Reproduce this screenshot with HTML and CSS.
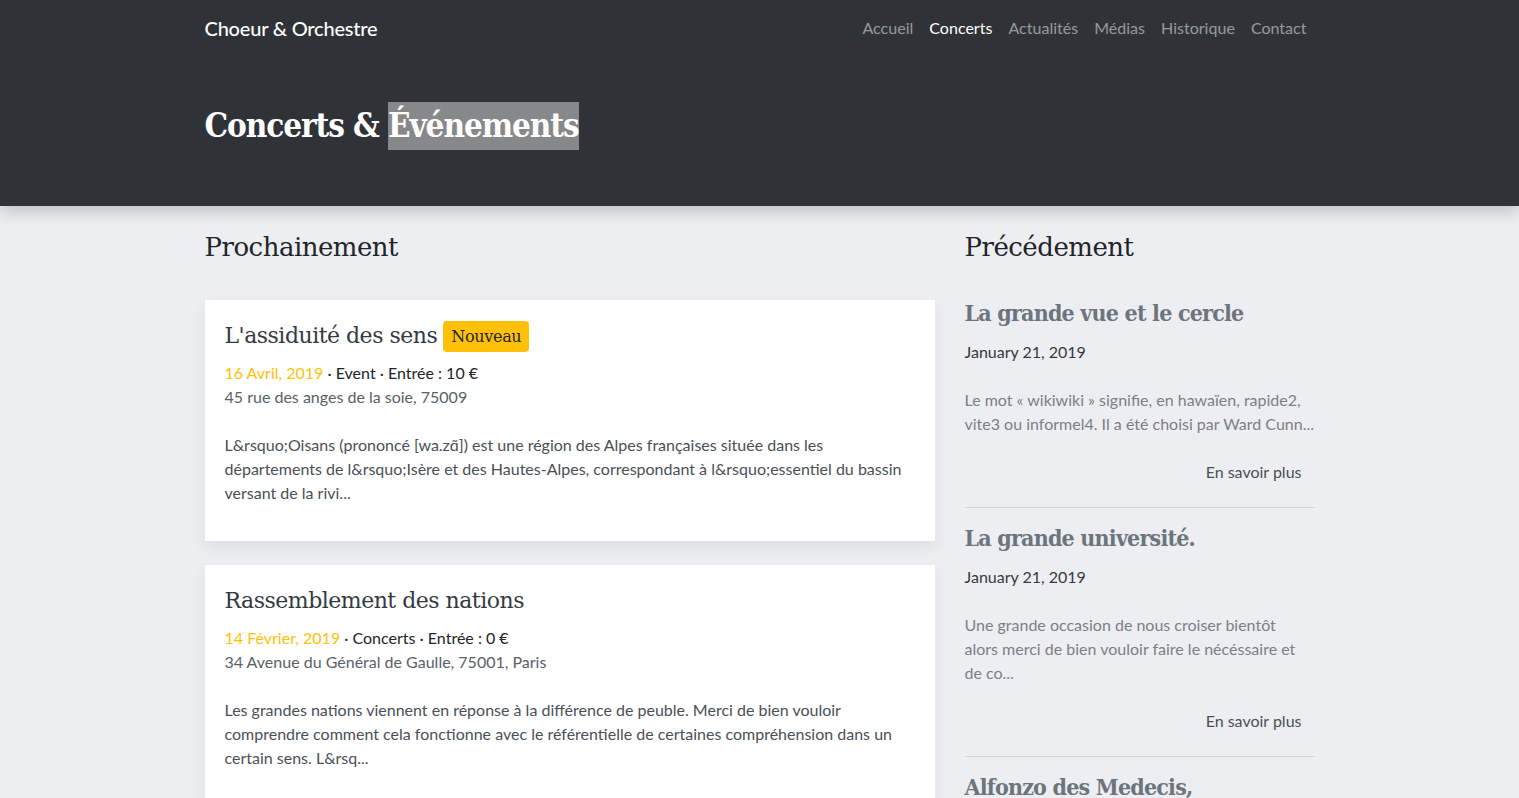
FILE: index.html
```html
<!DOCTYPE html>
<html lang="fr">
<head>
<meta charset="utf-8">
<title>Concerts & Événements</title>
<link rel="stylesheet" href="styles.css">
</head>
<body>
<header class="hero">
  <nav class="navbar container">
    <a class="brand" href="#">Choeur &amp; Orchestre</a>
    <ul class="nav">
      <li><a href="#">Accueil</a></li>
      <li><a class="active" href="#">Concerts</a></li>
      <li><a href="#">Actualités</a></li>
      <li><a href="#">Médias</a></li>
      <li><a href="#">Historique</a></li>
      <li><a href="#">Contact</a></li>
    </ul>
  </nav>
  <div class="container hero-title">
    <h1>Concerts &amp; <span class="sel">Événements</span></h1>
  </div>
</header>

<main class="container main">
  <section class="col-main">
    <h2 class="section-title">Prochainement</h2>

    <article class="card">
      <h3 class="card-title">L'assiduité des sens <span class="badge">Nouveau</span></h3>
      <p class="meta"><span class="date">16 Avril, 2019</span> · Event · Entrée : 10 €</p>
      <p class="address">45 rue des anges de la soie, 75009</p>
      <p class="excerpt">L&amp;rsquo;Oisans (prononcé [wa.zɑ̃]) est une région des Alpes françaises située dans les départements de l&amp;rsquo;Isère et des Hautes-Alpes, correspondant à l&amp;rsquo;essentiel du bassin versant de la rivi...</p>
    </article>

    <article class="card">
      <h3 class="card-title">Rassemblement des nations</h3>
      <p class="meta"><span class="date">14 Février, 2019</span> · Concerts · Entrée : 0 €</p>
      <p class="address">34 Avenue du Général de Gaulle, 75001, Paris</p>
      <p class="excerpt">Les grandes nations viennent en réponse à la différence de peuble. Merci de bien vouloir comprendre comment cela fonctionne avec le référentielle de certaines compréhension dans un certain sens. L&amp;rsq...</p>
    </article>
  </section>

  <aside class="col-side">
    <h2 class="section-title">Précédement</h2>

    <div class="post">
      <h3 class="post-title">La grande vue et le cercle</h3>
      <p class="post-date">January 21, 2019</p>
      <p class="post-excerpt">Le mot « wikiwiki » signifie, en hawaïen, rapide2, vite3 ou informel4. Il a été choisi par Ward Cunn...</p>
      <div class="more"><a href="#">En savoir plus</a></div>
    </div>

    <div class="post">
      <h3 class="post-title">La grande université.</h3>
      <p class="post-date">January 21, 2019</p>
      <p class="post-excerpt">Une grande occasion de nous croiser bientôt<br>alors merci de bien vouloir faire le nécéssaire et de co...</p>
      <div class="more"><a href="#">En savoir plus</a></div>
    </div>

    <div class="post">
      <h3 class="post-title">Alfonzo des Medecis,</h3>
      <p class="post-date">January 21, 2019</p>
      <p class="post-excerpt">Une rencontre inattendue.</p>
    </div>
  </aside>
</main>
</body>
</html>
```

FILE: styles.css
```css
* { box-sizing: border-box; }
html, body { margin: 0; padding: 0; }
body {
  background: #edeef2;
  font-family: Lato, "Open Sans", sans-serif;
  font-size: 16px;
  line-height: 24px;
  color: #212529;
}
a { text-decoration: none; }
p { margin: 0; }

.container {
  width: 1140px;
  margin: 0 auto;
  padding: 0 15px;
}

.hero {
  background: #2f3337;
  height: 206px;
  box-shadow: 0 6px 14px rgba(0, 0, 0, 0.18);
  position: relative;
  z-index: 1;
}

.navbar {
  height: 56px;
  display: flex;
  align-items: center;
  justify-content: space-between;
}
.brand {
  color: #fff;
  font-size: 20px;
  font-weight: 500;
  letter-spacing: -0.2px;
}
.nav {
  list-style: none;
  margin: 0;
  padding: 0;
  display: flex;
}
.nav a {
  display: block;
  padding: 8px;
  color: rgba(255, 255, 255, 0.5);
  font-size: 16px;
  letter-spacing: 0.02px;
}
.nav a.active { color: #fff; }

.hero-title h1 {
  margin: 0;
  padding-top: 46px;
  font-family: "DejaVu Serif", "Liberation Serif", serif;
  font-stretch: semi-condensed;
  font-size: 33px;
  line-height: 48px;
  font-weight: bold;
  color: #fff;
  letter-spacing: -1.1px;
}
.sel {
  display: inline-block;
  background: #87888a;
  line-height: 48px;
}

.main {
  display: flex;
  gap: 30px;
  padding-top: 22px;
}
.col-main { width: 730px; flex: none; }
.col-side { width: 350px; flex: none; }

.section-title {
  margin: 0 0 34px;
  font-family: "DejaVu Serif", "Liberation Serif", serif;
  font-weight: normal;
  font-size: 26px;
  line-height: 38px;
  color: #212529;
  letter-spacing: -0.5px;
}

.card {
  background: #fff;
  padding: 20px 20px 36px;
  margin-bottom: 24px;
  box-shadow: 0 6px 14px rgba(0, 0, 0, 0.07);
}
.card-title {
  margin: 0 0 9px;
  font-family: "DejaVu Serif", "Liberation Serif", serif;
  font-weight: normal;
  font-size: 22px;
  line-height: 32px;
  color: #343a40;
  letter-spacing: -0.5px;
  display: flex;
  align-items: center;
  gap: 6px;
}
.badge {
  background: #ffc107;
  color: #212529;
  font-size: 16px;
  line-height: 21px;
  padding: 5px 8px 5px;
  border-radius: 4px;
  letter-spacing: -0.3px;
}
.meta { color: #212529; }
.date { color: #ffc107; }
.address { color: #5a6168; margin-bottom: 24px; }
.excerpt { color: #4a5056; }

.post {
  padding-bottom: 23px;
  border-bottom: 1px solid #d6d8dc;
  margin-bottom: 17px;
}
.post-title {
  margin: 1px 0 14px;
  font-family: "DejaVu Serif", "Liberation Serif", serif;
  font-stretch: semi-condensed;
  font-weight: bold;
  font-size: 23px;
  line-height: 26px;
  color: #6c757d;
  letter-spacing: -0.8px;
}
.post-date { color: #343a40; margin-bottom: 24px; }
.post-excerpt { color: #7a8087; margin-bottom: 24px; }
.more { text-align: right; padding-right: 13px; }
.more a { color: #495057; }
```
